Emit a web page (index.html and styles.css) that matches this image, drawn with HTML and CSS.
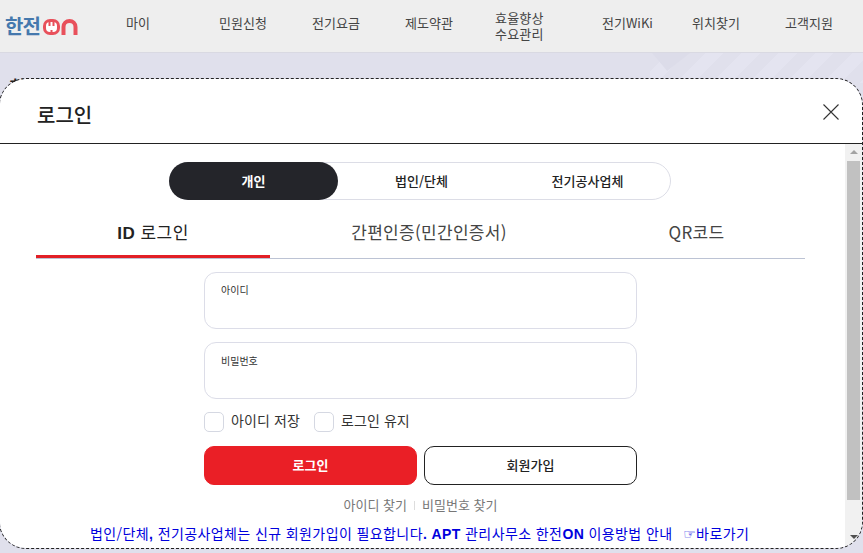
FILE: index.html
```html
<!DOCTYPE html>
<html lang="ko">
<head>
<meta charset="utf-8">
<title>한전ON 로그인</title>
<link rel="stylesheet" href="styles.css">
</head>
<body>
<header class="topbar">
  <a class="logo">
    <span class="logo-kr">한전</span>
    <svg class="logo-on" width="35" height="16" viewBox="0 0 35 16" aria-label="ON">
      <rect width="17" height="16" rx="7" fill="#e8505b"/>
      <rect x="3" y="3" width="11" height="10" rx="4" fill="#fff"/>
      <rect x="5.500" y="3" width="2" height="4" fill="#e8505b"/>
      <rect x="9.500" y="3" width="2" height="4" fill="#e8505b"/>
      <rect x="7.500" y="11" width="2" height="2" fill="#e8505b"/>
      <path d="M20.500 16V8a6 6 0 0 1 12 0v8" fill="none" stroke="#e8505b" stroke-width="4"/>
    </svg>
  </a>
  <nav class="gnb">
    <a>마이</a><a>민원신청</a><a>전기요금</a><a>제도약관</a><a class="two">효율향상<br>수요관리</a><a>전기WiKi</a><a>위치찾기</a><a>고객지원</a>
  </nav>
</header>
<section class="hero"><h1 class="hero-title">회원가입</h1></section>
<div class="modal">
  <div class="modal-head">
    <h2 class="modal-title">로그인</h2>
    <svg class="close" width="16" height="16" viewBox="0 0 16 16"><path d="M.5.500l15 15M15.500.500l-15 15" stroke="#333" stroke-width="1.100" fill="none"/></svg>
  </div>
  <div class="modal-main">
    <div class="modal-body">
      <div class="seg">
        <span class="seg-item active">개인</span>
        <span class="seg-item">법인/단체</span>
        <span class="seg-item">전기공사업체</span>
      </div>
      <div class="tabs">
        <span class="tab on"><b>ID</b> 로그인</span>
        <span class="tab">간편인증(민간인증서)</span>
        <span class="tab">QR코드</span>
      </div>
      <form class="form">
        <div class="field"><span class="field-label">아이디</span></div>
        <div class="field"><span class="field-label">비밀번호</span></div>
        <div class="checks">
          <label class="check"><i class="box"></i>아이디 저장</label>
          <label class="check"><i class="box"></i>로그인 유지</label>
        </div>
        <div class="buttons">
          <span class="btn primary">로그인</span>
          <span class="btn">회원가입</span>
        </div>
        <div class="finds"><a>아이디 찾기</a><i class="sep"></i><a>비밀번호 찾기</a></div>
      </form>
      <p class="notice">법인/단체<b>,</b> 전기공사업체는 신규 회원가입이 필요합니다<b>.</b> <b>APT</b> 관리사무소 한전<b>ON</b> 이용방법 안내 &nbsp;<span class="hand">☞</span>바로가기</p>
    </div>
    <div class="scrollbar">
      <i class="arrow up"></i>
      <div class="thumb"></div>
      <i class="arrow down"></i>
    </div>
  </div>
</div>
</body>
</html>
```
FILE: styles.css
```css
* { box-sizing: border-box; }
html, body { margin: 0; height: 100%; overflow: hidden; }
body {
  background: #ebebeb;
  color: #222;
  font-family: "Noto Sans CJK KR", "Noto Sans", sans-serif;
}
.topbar {
  height: 53px;
  background: #eeeeee;
  border-bottom: 1px solid #d9d9e2;
  display: flex;
  align-items: center;
}
.logo {
  width: 126px;
  padding-left: 5px;
  display: flex;
  align-items: center;
  gap: 1px;
}
.logo-kr {
  font-size: 20px;
  font-weight: 700;
  color: #4578ad;
  letter-spacing: -1px;
  width: 37px;
  line-height: 1;
}
.logo-on { flex: none; margin-top: 1px; }
.gnb {
  display: grid;
  grid-template-columns: 93px 93px 93px 91px 106px 90px 93px auto;
  align-items: center;
  font-size: 13px;
  color: #444;
  line-height: 16px;
}
.gnb a { white-space: nowrap; margin-bottom: 6px; }
.gnb a.two { margin-bottom: 0; margin-left: -1px; letter-spacing: 0.2px; }
.hero {
  position: relative;
  height: 500px;
  background:
    repeating-linear-gradient(135deg, transparent 0 13px, #e4e4f0 13px 26px) 650px 0 / 213px 30px no-repeat,
    #e0e0ec;
  padding: 21px 0 0 9px;
}
.hero::before {
  content: "";
  position: absolute;
  left: 652px;
  top: 0;
  width: 38px;
  height: 18px;
  background: #dcdce9;
  clip-path: polygon(0 0, 100% 0, 40% 100%);
}
.hero-title {
  margin: 0;
  font-size: 18px;
  font-weight: 500;
  line-height: 24px;
  color: #222;
}
.modal {
  position: absolute;
  left: 0;
  top: 79px;
  width: 862px;
  height: 469px;
  background: #fff;
  border-radius: 26px;
  outline: 1px dashed #222;
  outline-offset: 0;
  display: flex;
  flex-direction: column;
  overflow: hidden;
}
.modal-head {
  height: 65px;
  flex: none;
  border-bottom: 1px solid #222;
  padding: 0 23px 0 37px;
  display: flex;
  align-items: center;
  justify-content: space-between;
}
.modal-title {
  margin: 8px 0 0;
  font-size: 20px;
  font-weight: 500;
  line-height: 28px;
  color: #222;
}
.close { margin-top: 2px; }
.modal-main { flex: 1; display: flex; min-height: 0; }
.modal-body { flex: 1; padding: 18px 40px 0 36px; min-width: 0; }
.seg {
  width: 502px;
  height: 38px;
  margin-left: 133px;
  border: 1px solid #dcdde6;
  border-radius: 19px;
  display: grid;
  grid-template-columns: 168px 167px 1fr;
  font-size: 13px;
  font-weight: 500;
  color: #222;
}
.seg-item { display: flex; align-items: center; justify-content: center; padding-bottom: 2px; }
.seg-item.active {
  margin: -1px 0 -1px -1px;
  background: #24252a;
  color: #fff;
  border-radius: 19px;
  font-weight: 700;
}
.tabs {
  margin-top: 13px;
  display: grid;
  grid-template-columns: 234px 318px 217px;
  height: 46px;
  border-bottom: 1px solid #bcc3d4;
  font-size: 17px;
  color: #444;
}
.tab { height: 45px; line-height: 38px; text-align: center; letter-spacing: 0.3px; }
.tab.on { border-bottom: 3px solid #e21f26; color: #222; letter-spacing: 0.5px; }
.tab b { font-weight: 700; font-family: "Liberation Sans", sans-serif; }
.form { width: 433px; margin: 13px 0 0 168px; }
.field {
  height: 57px;
  margin-bottom: 13px;
  border: 1px solid #dcdde8;
  border-radius: 12px;
  padding: 10px 16px;
}
.field + .field .field-label { padding-top: 1px; }
.field-label { display: block; font-size: 10px; line-height: 13px; color: #333; }
.checks { display: flex; gap: 14px; margin-top: 13px; height: 20px; }
.check {
  display: flex;
  align-items: flex-start;
  gap: 7px;
  font-size: 14px;
  line-height: 16px;
  color: #333;
  letter-spacing: 0.1px;
}
.box {
  width: 20px;
  height: 20px;
  border: 1px solid #d5d8e2;
  border-radius: 5px;
  background: #fff;
}
.buttons {
  margin-top: 14px;
  display: grid;
  grid-template-columns: 213px 213px;
  gap: 7px;
}
.btn {
  height: 39px;
  border: 1px solid #222;
  border-radius: 10px;
  display: flex;
  align-items: center;
  justify-content: center;
  padding-bottom: 3px;
  font-size: 13px;
  font-weight: 500;
  color: #222;
}
.btn.primary { background: #ea1f26; border-color: #ea1f26; color: #fff; font-weight: 700; }
.finds {
  margin-top: 11px;
  display: flex;
  justify-content: center;
  align-items: center;
  gap: 7px;
  font-size: 13px;
  line-height: 18px;
  color: #777;
}
.sep { width: 1px; height: 9px; background: #ddd; }
.notice {
  margin: 10px 0 0 54px;
  font-size: 14px;
  line-height: 18px;
  color: #0000dd;
  white-space: nowrap;
  letter-spacing: 0.4px;
}
.notice b { font-family: "Liberation Sans", sans-serif; font-weight: 700; }
.hand { font-family: "DejaVu Sans", sans-serif; font-size: 14px; margin-left: 2px; font-weight: 700; }
.scrollbar {
  flex: none;
  width: 17px;
  background: #f1f1f1;
  display: flex;
  flex-direction: column;
  align-items: center;
  padding: 6px 0 9px;
}
.thumb { width: 13px; height: 339px; margin-top: 7px; background: #c1c1c1; }
.arrow { width: 0; height: 0; border-left: 4px solid transparent; border-right: 4px solid transparent; }
.arrow.up { border-bottom: 4px solid #a3a3a3; }
.arrow.down { margin-top: auto; border-top: 4px solid #505050; }
```
